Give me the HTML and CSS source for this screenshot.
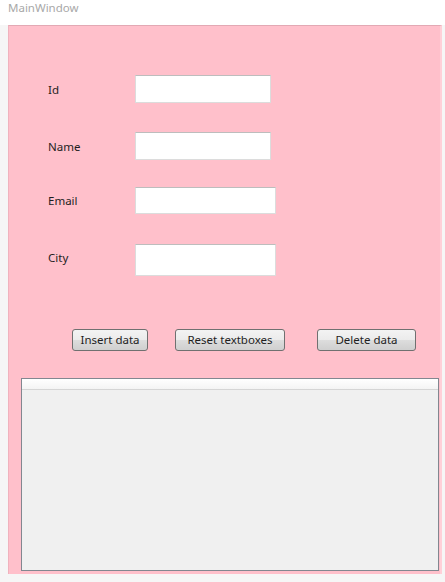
FILE: index.html
```html
<!DOCTYPE html>
<html>
<head>
<meta charset="utf-8">
<link rel="stylesheet" href="styles.css">
</head>
<body>
<div class="titlebar">MainWindow</div>
<div class="panel">
  <div class="form">
    <div class="row row-id"><label class="lbl">Id</label><input class="tb tb-a" type="text"></div>
    <div class="row row-name"><label class="lbl">Name</label><input class="tb tb-a" type="text"></div>
    <div class="row row-email"><label class="lbl">Email</label><input class="tb tb-b" type="text"></div>
    <div class="row row-city"><label class="lbl lbl-city">City</label><input class="tb tb-c" type="text"></div>
  </div>
  <div class="buttons">
    <button class="btn btn-insert">Insert data</button>
    <button class="btn btn-reset">Reset textboxes</button>
    <button class="btn btn-delete">Delete data</button>
  </div>
  <div class="grid">
    <div class="grid-header"></div>
    <div class="grid-body"></div>
  </div>
</div>
</body>
</html>
```
FILE: styles.css
```css
html, body {
  margin: 0;
  padding: 0;
}
body {
  width: 445px;
  height: 582px;
  background: #f6f6f6;
  font-family: "Noto Sans", "DejaVu Sans", sans-serif;
  font-size: 11.5px;
  color: #1e1e1e;
  overflow: hidden;
}
.titlebar {
  height: 25px;
  background: #ffffff;
  color: #a8a8a8;
  padding-left: 8px;
  line-height: 16px;
  font-size: 11.5px;
  box-sizing: border-box;
}
.panel {
  margin-left: 8px;
  width: 434px;
  height: 549px;
  background: #ffc0cb;
  box-sizing: border-box;
  border-top: 1px solid #e2a9b4;
  border-left: 1px solid #f0b3be;
  border-right: 2px solid #ffd0d8;
  display: flex;
  flex-direction: column;
}
.form {
  display: flex;
  flex-direction: column;
  margin-top: 49px;
  margin-left: 39px;
}
.row {
  display: flex;
  align-items: center;
}
.row-name { margin-top: 29px; }
.row-email { margin-top: 27px; }
.row-city { margin-top: 30px; }
.lbl {
  width: 87px;
  font-size: 11.5px;
}
.lbl-city {
  margin-bottom: 6px;
}
.tb {
  box-sizing: border-box;
  border: 1px solid #dcdcdc;
  border-top-color: #bdbdbd;
  background: #ffffff;
  padding: 0;
  margin: 0;
  outline: none;
}
.tb-a { width: 136px; height: 28px; }
.tb-b { width: 141px; height: 27px; }
.tb-c { width: 141px; height: 32px; }
.buttons {
  display: flex;
  margin-top: 53px;
  margin-left: 63px;
}
.btn {
  box-sizing: border-box;
  height: 22px;
  border: 1px solid #707070;
  border-radius: 3px;
  background: linear-gradient(#f3f3f3 0%, #ebebeb 50%, #dddddd 50%, #cfcfcf 100%);
  font-family: "Noto Sans", "DejaVu Sans", sans-serif;
  font-size: 11.5px;
  color: #1e1e1e;
  padding: 0;
  line-height: 18px;
}
.btn-insert { width: 76px; }
.btn-reset { width: 110px; margin-left: 27px; }
.btn-delete { width: 99px; margin-left: 32px; }
.grid {
  margin-top: 27px;
  margin-left: 12px;
  width: 418px;
  height: 193px;
  box-sizing: border-box;
  border: 1px solid #828790;
  background: #f0f0f0;
  display: flex;
  flex-direction: column;
}
.grid-header {
  height: 10px;
  background: linear-gradient(#ffffff, #f4f4f4);
  border-bottom: 1px solid #d5d5d5;
}
.grid-body {
  flex: 1;
}
```
